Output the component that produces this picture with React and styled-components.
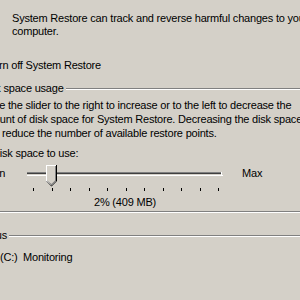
import React from "react";
import styled, { createGlobalStyle } from "styled-components";

const GlobalStyle = createGlobalStyle`
  body {
    margin: 0;
    background: #d4d0c8;
  }
`;

const Frame = styled.div`
  width: 300px;
  height: 300px;
  overflow: hidden;
  background: #d4d0c8;
  color: #000;
  font-family: "Liberation Sans", Arial, sans-serif;
  font-size: 11px;
  letter-spacing: -0.2px;
`;

// the dialog is cropped on the left, so the sheet starts off-screen
const Sheet = styled.div`
  margin-left: -32px;
  width: 400px;
  padding-top: 12px;
`;

const Intro = styled.p`
  margin: 0;
  padding-left: 44px;
  line-height: 13px;
  white-space: nowrap;
`;

const CheckRow = styled.label`
  display: flex;
  align-items: center;
  gap: 4px;
  margin-top: 21px;
  padding-left: 2px;
  line-height: 13px;
  white-space: nowrap;
`;

const CheckBox = styled.span`
  width: 13px;
  height: 13px;
  box-sizing: border-box;
  background: #fff;
  border: 1px solid;
  border-color: #808080 #fff #fff #808080;
`;

const Group = styled.div`
  margin-top: ${(p) => p.$top}px;
  margin-left: ${(p) => p.$left}px;
`;

const GroupHeader = styled.div`
  display: flex;
  align-items: center;
  height: 13px;
`;

const GroupFooter = styled.div`
  display: flex;
  padding-top: 2px;
`;

const Legend = styled.span`
  margin-left: 6px;
  padding: 0 2px;
  line-height: 13px;
  white-space: nowrap;
`;

const Rule = styled.div`
  flex: 1;
  height: 0;
  border-top: 1px solid #808080;
  border-bottom: 1px solid #fff;
`;

const GroupBody = styled.div`
  padding-left: 7px;
`;

const Paragraph = styled.p`
  margin: 3px 0 0;
  line-height: 14px;
  white-space: nowrap;
`;

const FieldLabel = styled.div`
  margin-top: 7px;
  padding-left: 13px;
  line-height: 13px;
`;

const SliderRow = styled.div`
  display: flex;
  align-items: flex-start;
  margin-top: 4px;
`;

const EndLabel = styled.span`
  width: ${(p) => p.$width}px;
  padding-left: ${(p) => p.$pad}px;
  padding-top: 3px;
  box-sizing: border-box;
  line-height: 13px;
`;

const Percent = styled.div`
  width: 196px;
  margin: 4px 0 0 48px;
  text-align: center;
  line-height: 13px;
`;

const DriveRow = styled.div`
  display: flex;
  margin-top: 9px;
  padding-left: 31px;
  line-height: 13px;
`;

const DriveCell = styled.span`
  width: 23px;
`;

const Trackbar = ({ ticks = 11, value = 1 }) => {
  const step = 18.5;
  const tx = 6 + value * step;
  return (
    <svg width="196" height="28" viewBox="0 0 196 28">
      <rect x="0" y="8" width="195" height="1" fill="#808080" />
      <rect x="0" y="9" width="195" height="1" fill="#404040" />
      <rect x="0" y="10" width="195" height="1" fill="#d4d0c8" />
      <rect x="0" y="11" width="196" height="1" fill="#fff" />
      <rect x="194" y="8" width="1" height="3" fill="#fff" />
      {Array.from({ length: ticks }).map((_, i) => (
        <rect key={i} x={Math.round(6 + i * step)} y="24" width="1" height="3" fill="#000" />
      ))}
      <g transform={`translate(${tx - 5.5} 1)`}>
        <polygon points="0,0 11,0 11,16 5.5,21.5 0,16" fill="#000" />
        <polygon points="0,0 10,0 10,16 5.5,20.5 0,16" fill="#fff" />
        <polygon points="1,1 10,1 10,16 5.5,20.5 1,16" fill="#808080" />
        <polygon points="1,1 9,1 9,15.5 5.5,19 1,15.5" fill="#d4d0c8" />
      </g>
    </svg>
  );
};

export default function App() {
  return (
    <>
      <GlobalStyle />
      <Frame>
        <Sheet>
          <Intro>
            System Restore can track and reverse harmful changes to your
            <br />
            computer.
          </Intro>

          <CheckRow>
            <CheckBox />
            Turn off System Restore
          </CheckRow>

          <Group $top={10} $left={4}>
            <GroupHeader>
              <Legend>Disk space usage</Legend>
              <Rule />
            </GroupHeader>
            <GroupBody>
              <Paragraph>
                Move the slider to the right to increase or to the left to decrease the
                <br />
                amount of disk space for System Restore. Decreasing the disk space
                <br />
                may reduce the number of available restore points.
              </Paragraph>
              <FieldLabel>Disk space to use:</FieldLabel>
              <SliderRow>
                <EndLabel $width={48} $pad={9}>
                  Min
                </EndLabel>
                <Trackbar ticks={11} value={1} />
                <EndLabel $width={40} $pad={19}>
                  Max
                </EndLabel>
              </SliderRow>
              <Percent>2% (409 MB)</Percent>
            </GroupBody>
            <GroupFooter>
              <Rule />
            </GroupFooter>
          </Group>

          <Group $top={16} $left={1}>
            <GroupHeader>
              <Legend>Status</Legend>
              <Rule />
            </GroupHeader>
            <DriveRow>
              <DriveCell>(C:)</DriveCell>
              Monitoring
            </DriveRow>
          </Group>
        </Sheet>
      </Frame>
    </>
  );
}
